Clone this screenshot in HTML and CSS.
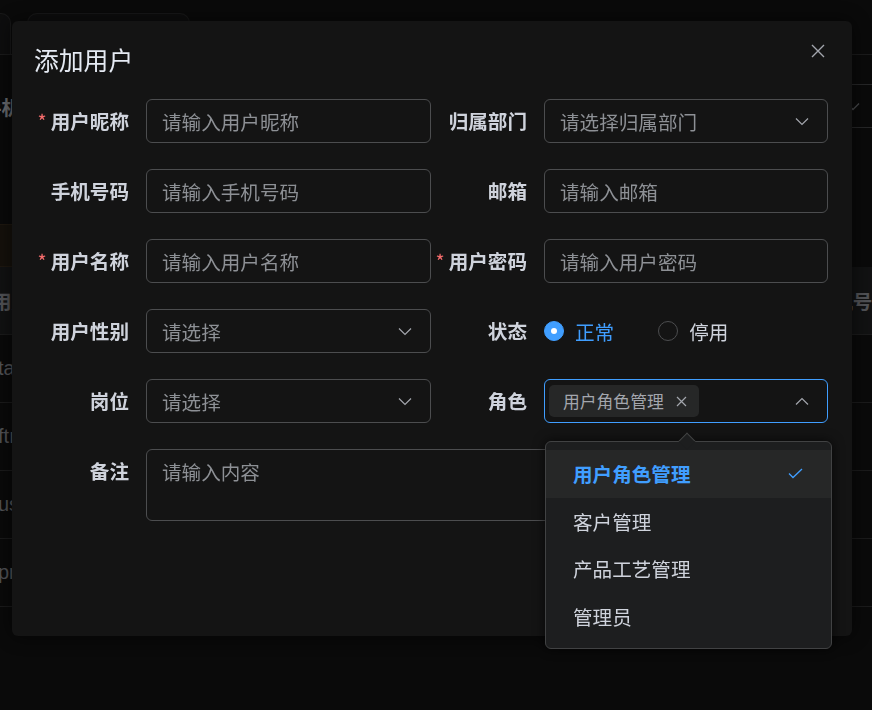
FILE: index.html
```html
<!DOCTYPE html>
<html lang="zh-CN">
<head>
<meta charset="utf-8">
<title>添加用户</title>
<link rel="stylesheet" href="styles.css">
</head>
<body>
<div class="page">
  <div class="tabs"><div class="tab tab-a"></div><div class="tab tab-b"></div></div>
  <div class="filters">
    <div class="filter-row">
      <span class="f-label">手机</span>
      <div class="f-select">
        <svg class="chev" width="14" height="9" viewBox="0 0 14 9"><path d="M1 1.5 L7 7.5 L13 1.5" fill="none" stroke="#8d9095" stroke-width="1.3"/></svg>
      </div>
    </div>
  </div>
  <div class="alert-row"></div>
  <div class="thead"><span class="th-left">用户</span><span class="th-right">手机号码</span></div>
  <div class="trow"><span class="cell">ta</span></div>
  <div class="trow"><span class="cell">ftı</span></div>
  <div class="trow"><span class="cell">us</span></div>
  <div class="trow"><span class="cell">pro</span></div>
</div>

<div class="overlay">
  <div class="dialog">
    <div class="dlg-header">
      <span class="dlg-title">添加用户</span>
      <svg class="dlg-close" width="14" height="14" viewBox="0 0 14 14"><path d="M1 1 L13 13 M13 1 L1 13" stroke="#a3a6ad" stroke-width="1.4" fill="none"/></svg>
    </div>
    <div class="form">
      <label class="lbl req">用户昵称</label>
      <div class="inp">请输入用户昵称</div>
      <label class="lbl">归属部门</label>
      <div class="inp sel">请选择归属部门
        <svg width="14" height="9" viewBox="0 0 14 9"><path d="M1 1.5 L7 7.5 L13 1.5" fill="none" stroke="#a3a6ad" stroke-width="1.2"/></svg>
      </div>

      <label class="lbl">手机号码</label>
      <div class="inp">请输入手机号码</div>
      <label class="lbl">邮箱</label>
      <div class="inp">请输入邮箱</div>

      <label class="lbl req">用户名称</label>
      <div class="inp">请输入用户名称</div>
      <label class="lbl req">用户密码</label>
      <div class="inp">请输入用户密码</div>

      <label class="lbl">用户性别</label>
      <div class="inp sel">请选择
        <svg width="14" height="9" viewBox="0 0 14 9"><path d="M1 1.5 L7 7.5 L13 1.5" fill="none" stroke="#a3a6ad" stroke-width="1.2"/></svg>
      </div>
      <label class="lbl">状态</label>
      <div class="radios">
        <span class="radio on"><span class="dot"></span><span class="rtxt">正常</span></span>
        <span class="radio"><span class="dot"></span><span class="rtxt">停用</span></span>
      </div>

      <label class="lbl">岗位</label>
      <div class="inp sel">请选择
        <svg width="14" height="9" viewBox="0 0 14 9"><path d="M1 1.5 L7 7.5 L13 1.5" fill="none" stroke="#a3a6ad" stroke-width="1.2"/></svg>
      </div>
      <label class="lbl">角色</label>
      <div class="inp sel role">
        <span class="tag">用户角色管理
          <svg width="11" height="11" viewBox="0 0 11 11"><path d="M1 1 L10 10 M10 1 L1 10" stroke="#a3a6ad" stroke-width="1.2" fill="none"/></svg>
        </span>
        <svg width="14" height="9" viewBox="0 0 14 9"><path d="M1 7.5 L7 1.5 L13 7.5" fill="none" stroke="#a3a6ad" stroke-width="1.2"/></svg>
        <div class="dropdown">
          <span class="arrow"></span>
          <div class="opt selected">用户角色管理
            <svg width="15" height="11" viewBox="0 0 15 11"><path d="M1 5.5 L5 9.5 L14 1" fill="none" stroke="#409eff" stroke-width="1.3"/></svg>
          </div>
          <div class="opt">客户管理</div>
          <div class="opt">产品工艺管理</div>
          <div class="opt">管理员</div>
        </div>
      </div>

      <label class="lbl">备注</label>
      <div class="inp area">请输入内容</div>
    </div>
  </div>
</div>
</body>
</html>
```

FILE: styles.css
```css
html, body {
  margin: 0;
  padding: 0;
}
body {
  width: 872px;
  height: 710px;
  overflow: hidden;
  background: #141414;
  font-family: "Noto Sans CJK SC", "Noto Sans", sans-serif;
}

/* background page */
.page {
  width: 872px;
}
.tabs {
  height: 55px;
  box-sizing: border-box;
  padding-top: 14px;
  border-bottom: 1px solid #363637;
  display: flex;
  align-items: flex-end;
  gap: 16px;
}
.tab {
  height: 41px;
  box-sizing: border-box;
  background: #1b1b1c;
  border: 1px solid #303031;
  border-bottom: none;
}
.tab-a {
  width: 11px;
  border-left: none;
  border-radius: 0 10px 0 0;
}
.tab-b {
  width: 163px;
  border-radius: 10px 10px 0 0;
}
.filters {
  height: 169px;
  box-sizing: border-box;
  padding-top: 29px;
}
.filter-row {
  height: 44px;
  display: flex;
  align-items: center;
}
.f-label {
  margin-left: -18px;
  font-size: 19.6px;
  font-weight: 700;
  color: #cfd3dc;
}
.f-select {
  margin-left: auto;
  margin-right: -60px;
  width: 300px;
  height: 44px;
  box-sizing: border-box;
  border: 1px solid #4c4d4f;
  border-radius: 6px;
  display: flex;
  align-items: center;
  justify-content: flex-end;
  padding-right: 71px;
}
.alert-row {
  width: 60px;
  height: 43px;
  box-sizing: border-box;
  background: #2a2217;
  border-top: 1px solid #3d3020;
  border-bottom: 1px solid #3d3020;
}
.thead {
  height: 68px;
  box-sizing: border-box;
  background: #232425;
  border-bottom: 1px solid #363637;
  display: flex;
  align-items: center;
  justify-content: space-between;
  font-size: 19.6px;
  font-weight: 700;
  color: #a3a6ad;
}
.th-left {
  margin-left: -8px;
}
.th-right {
  margin-right: -20px;
}
.trow {
  height: 68px;
  box-sizing: border-box;
  border-bottom: 1px solid #363637;
  display: flex;
  align-items: center;
  font-family: "Liberation Sans", Arial, sans-serif;
  font-size: 20px;
  color: #a3a6ad;
}
.cell {
  margin-left: -2px;
}

/* overlay + dialog */
.overlay {
  position: fixed;
  inset: 0;
  background: rgba(0, 0, 0, 0.5);
}
.dialog {
  margin: 21px 0 0 12px;
  width: 840px;
  height: 615px;
  box-sizing: border-box;
  background: #141414;
  border-radius: 6px;
  box-shadow: 0 0 20px rgba(0, 0, 0, 0.6);
}
.dlg-header {
  display: flex;
  justify-content: space-between;
  align-items: flex-start;
  padding: 22px 27px 23px 22px;
}
.dlg-title {
  font-size: 24.8px;
  line-height: 33px;
  color: #e5eaf3;
}
.dlg-close {
  margin-top: 1px;
}
.form {
  padding: 0 22px;
  display: grid;
  grid-template-columns: 112px 285px 113px 284px;
  grid-auto-rows: 44px;
  row-gap: 26px;
}
.lbl {
  box-sizing: border-box;
  padding-right: 17px;
  text-align: right;
  font-size: 19.6px;
  line-height: 44px;
  font-weight: 700;
  color: #cfd3dc;
  white-space: nowrap;
}
.lbl.req::before {
  content: "*";
  color: #f56c6c;
  margin-right: 4px;
  font-weight: 400;
}
.inp {
  height: 44px;
  box-sizing: border-box;
  border: 1px solid #4c4d4f;
  border-radius: 6px;
  padding: 0 15px;
  display: flex;
  align-items: center;
  font-size: 19.6px;
  color: #8d9095;
  white-space: nowrap;
}
.inp.sel {
  justify-content: space-between;
  padding-right: 18px;
}
.inp.role {
  position: relative;
  border-color: #409eff;
  padding-left: 4px;
}
.tag {
  height: 32px;
  box-sizing: border-box;
  padding: 0 12px 0 14px;
  border-radius: 5px;
  background: #262727;
  display: flex;
  align-items: center;
  gap: 12px;
  font-size: 16.8px;
  color: #a3a6ad;
}
.radios {
  display: flex;
  align-items: center;
}
.radio {
  display: flex;
  align-items: center;
  gap: 11px;
  margin-right: 44px;
  font-size: 19.6px;
  color: #cfd3dc;
}
.dot {
  width: 20px;
  height: 20px;
  box-sizing: border-box;
  border-radius: 50%;
  border: 1px solid #4c4d4f;
  display: flex;
  align-items: center;
  justify-content: center;
}
.radio.on .dot {
  background: #409eff;
  border-color: #409eff;
}
.radio.on .dot::after {
  content: "";
  width: 6px;
  height: 6px;
  border-radius: 50%;
  background: #fff;
}
.radio.on .rtxt {
  color: #409eff;
}
.inp.area {
  grid-column: span 3;
  height: 72px;
  align-items: flex-start;
  padding: 7px 15px;
  line-height: 29px;
}

/* dropdown popper */
.dropdown {
  position: absolute;
  top: 61px;
  left: 0;
  width: 287px;
  box-sizing: border-box;
  padding: 8px 0;
  background: #1d1e1f;
  border: 1px solid #414243;
  border-radius: 6px;
  box-shadow: 0 0 12px rgba(0, 0, 0, 0.7);
  z-index: 5;
}
.arrow {
  position: absolute;
  top: -7px;
  left: 135px;
  width: 12px;
  height: 12px;
  box-sizing: border-box;
  background: #1d1e1f;
  border: 1px solid #414243;
  border-right-color: transparent;
  border-bottom-color: transparent;
  transform: rotate(45deg);
}
.opt {
  height: 47.6px;
  box-sizing: border-box;
  padding: 0 28px 0 27px;
  display: flex;
  align-items: center;
  justify-content: space-between;
  font-size: 19.6px;
  color: #cfd3dc;
}
.opt.selected {
  background: #262727;
  color: #409eff;
  font-weight: 700;
  position: relative;
}
```
